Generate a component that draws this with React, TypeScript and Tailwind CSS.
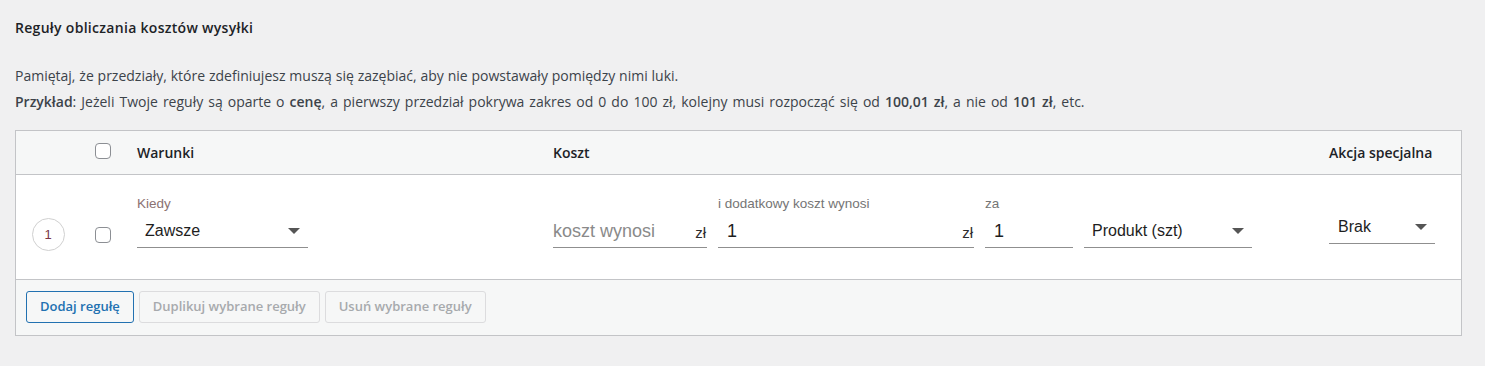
import React from "react";

const uiFont = { fontFamily: '"Open Sans", "Noto Sans", sans-serif' };
const fieldFont = { fontFamily: '"Liberation Sans", Arial, sans-serif' };

function Caret() {
  return (
    <svg width="12" height="6" viewBox="0 0 12 6" className="shrink-0">
      <path d="M0 0h12L6 6z" fill="#555" />
    </svg>
  );
}

function Checkbox({ className = "" }: { className?: string }) {
  return (
    <span
      className={`block w-4 h-4 rounded-[4px] border border-[#8c8f94] bg-white ${className}`}
    />
  );
}

function FieldLabel({ text, tone = "gray" }: { text: string; tone?: "gray" | "warm" }) {
  return (
    <div
      className={`h-[16px] leading-[16px] text-[13.5px] whitespace-nowrap ${
        tone === "warm" ? "text-[#8b7272]" : "text-[#757575]"
      }`}
    >
      {text}
    </div>
  );
}

function SelectField({ value, label, className = "" }: { value: string; label?: string; className?: string }) {
  return (
    <div className={`flex flex-col ${className}`} style={fieldFont}>
      <FieldLabel text={label ?? ""} tone="warm" />
      <div className="h-[36px] flex items-center justify-between pl-[8px] pr-[8px] pt-[3px] border-b border-[#8f8f8f] text-[16px] text-[#1e1e1e]">
        <span>{value}</span>
        <Caret />
      </div>
    </div>
  );
}

function TextField({
  value,
  placeholder,
  label,
  suffix,
  className = "",
}: {
  value?: string;
  placeholder?: string;
  label?: string;
  suffix?: string;
  className?: string;
}) {
  return (
    <div className={`flex flex-col ${className}`} style={fieldFont}>
      <FieldLabel text={label ?? ""} />
      <div className="h-[36px] flex items-center justify-between pt-[3px] border-b border-[#8f8f8f]">
        {value ? (
          <span className="pl-[9px] text-[18px] text-[#1e1e1e]">{value}</span>
        ) : (
          <span className="text-[18px] text-[#8a8a8a]">{placeholder}</span>
        )}
        {suffix && <span className="pr-[1px] pt-[4px] text-[15px] text-[#2c2c2c]">{suffix}</span>}
      </div>
    </div>
  );
}

const actionButtons = [
  { name: "Dodaj regułę", active: true },
  { name: "Duplikuj wybrane reguły", active: false },
  { name: "Usuń wybrane reguły", active: false },
];

export default function App() {
  return (
    <div className="min-h-[366px] bg-[#f0f0f1] pl-[15px] pr-[23px] pt-[18px] text-[#3c434a]" style={uiFont}>
      <h2 className="text-[14px] leading-[20px] font-semibold tracking-[0.3px] text-[#1d2327]">
        Reguły obliczania kosztów wysyłki
      </h2>

      <p className="mt-[25px] text-[14px] leading-[26px] [word-spacing:0.2px]">
        Pamiętaj, że przedziały, które zdefiniujesz muszą się zazębiać, aby nie powstawały pomiędzy nimi luki.
      </p>
      <p className="text-[14px] leading-[26px] [word-spacing:1.4px]">
        <strong className="font-semibold">Przykład</strong>: Jeżeli Twoje reguły są oparte o{" "}
        <strong className="font-semibold">cenę</strong>, a pierwszy przedział pokrywa zakres od 0 do 100 zł, kolejny
        musi rozpocząć się od <strong className="font-semibold">100,01 zł</strong>, a nie od{" "}
        <strong className="font-semibold">101 zł</strong>, etc.
      </p>

      <div className="mt-[15px] border border-[#c3c4c7] bg-white">
        {/* header */}
        <div className="flex items-center h-[44px] bg-[#f6f7f7] border-b border-[#c3c4c7] text-[14px] font-semibold text-[#1d2327]">
          <div className="w-[64px]" />
          <div className="w-[57px] pl-[15px]">
            <Checkbox className="-mt-[4px]" />
          </div>
          <div className="w-[416px]">Warunki</div>
          <div className="flex-1">Koszt</div>
          <div className="w-[106px] whitespace-nowrap">Akcja specjalna</div>
          <div className="w-[26px]" />
        </div>

        {/* rule row */}
        <div className="flex h-[105px] border-b border-[#c3c4c7]">
          <div className="w-[64px] flex justify-center pt-[43px]">
            <span
              className="w-[33px] h-[33px] rounded-full border border-[#d0d0d0] flex items-center justify-center text-[13px] text-[#7b3546]"
              style={fieldFont}
            >
              1
            </span>
          </div>
          <div className="w-[57px] pl-[15px] pt-[52px]">
            <Checkbox />
          </div>
          <div className="w-[416px] pt-[21px]">
            <SelectField label="Kiedy" value="Zawsze" className="w-[171px]" />
          </div>
          <div className="flex-1 pt-[21px] flex gap-[11px]">
            <TextField placeholder="koszt wynosi" suffix="zł" className="w-[154px]" />
            <TextField label="i dodatkowy koszt wynosi" value="1" suffix="zł" className="w-[256px]" />
            <TextField label="za" value="1" className="w-[88px]" />
            <SelectField value="Produkt (szt)" className="w-[168px]" />
          </div>
          <div className="w-[106px] flex items-center">
            <div
              className="w-full h-[34px] flex items-center justify-between pl-[9px] pr-[8px] pt-[1px] border-b border-[#8f8f8f] text-[16px] text-[#1e1e1e]"
              style={fieldFont}
            >
              <span>Brak</span>
              <Caret />
            </div>
          </div>
          <div className="w-[26px]" />
        </div>

        {/* footer */}
        <div className="flex gap-[5px] h-[55px] bg-[#f6f7f7] pl-[10px] pt-[11px]">
          {actionButtons.map((btn) => (
            <button
              key={btn.name}
              className={`h-[32px] px-[13px] rounded-[3px] border text-[13px] font-semibold ${
                btn.active
                  ? "border-[#2271b1] text-[#2271b1] bg-[#f6f7f7]"
                  : "border-[#dcdcde] text-[#a7aaad] bg-[#f6f7f7]"
              }`}
              style={uiFont}
            >
              {btn.name}
            </button>
          ))}
        </div>
      </div>
    </div>
  );
}
